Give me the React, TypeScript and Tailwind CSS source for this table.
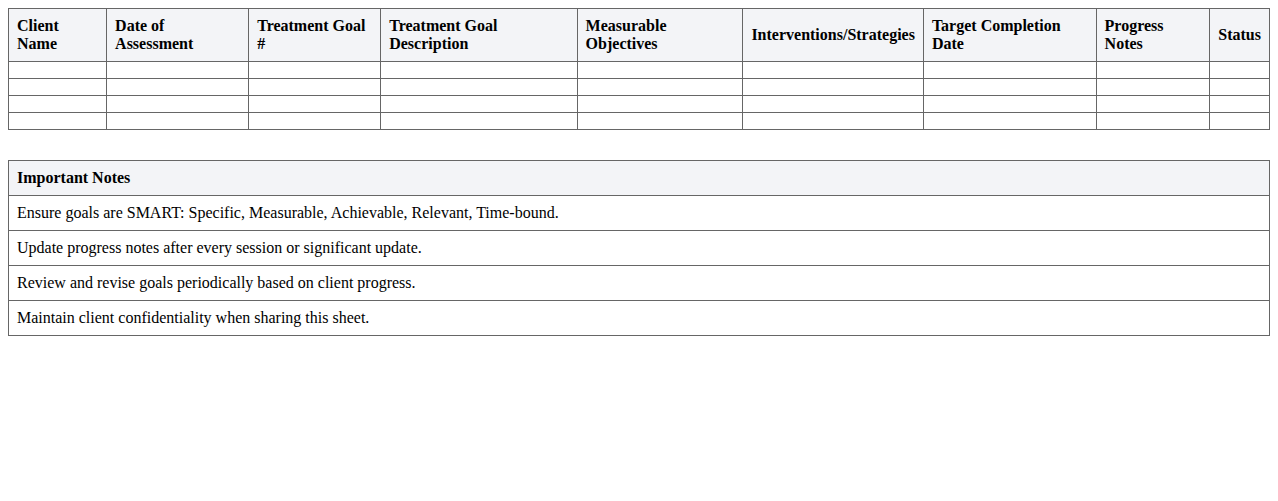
import React from 'react';

const columns = [
  'Client Name',
  'Date of Assessment',
  'Treatment Goal #',
  'Treatment Goal Description',
  'Measurable Objectives',
  'Interventions/Strategies',
  'Target Completion Date',
  'Progress Notes',
  'Status',
];

const notes = [
  'Ensure goals are SMART: Specific, Measurable, Achievable, Relevant, Time-bound.',
  'Update progress notes after every session or significant update.',
  'Review and revise goals periodically based on client progress.',
  'Maintain client confidentiality when sharing this sheet.',
];

const cell = 'border border-[#666] p-2 text-left align-middle';

export default function App() {
  return (
    <div className="p-2 bg-white text-black text-[16px] leading-[normal] font-['Liberation_Serif','Times_New_Roman',serif]">
      {/* goals table */}
      <table className="w-full border-collapse mb-[30px]">
        <thead>
          <tr className="bg-[#f3f4f7]">
            {columns.map((c) => (
              <th key={c} className={`${cell} font-bold`}>
                {c}
              </th>
            ))}
          </tr>
        </thead>
        <tbody>
          {[0, 1, 2, 3].map((r) => (
            <tr key={r}>
              {columns.map((c) => (
                <td key={c} className={cell}></td>
              ))}
            </tr>
          ))}
        </tbody>
      </table>

      {/* notes */}
      <table className="w-full border-collapse">
        <thead>
          <tr className="bg-[#f3f4f7]">
            <th className={`${cell} font-bold`}>Important Notes</th>
          </tr>
        </thead>
        <tbody>
          {notes.map((n) => (
            <tr key={n}>
              <td className={cell}>{n}</td>
            </tr>
          ))}
        </tbody>
      </table>
    </div>
  );
}
